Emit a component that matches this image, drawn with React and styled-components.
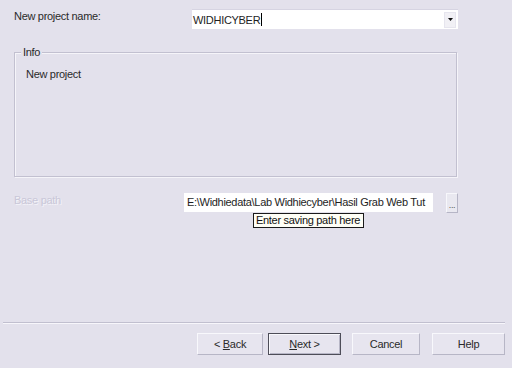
import React from "react";
import styled, { createGlobalStyle } from "styled-components";

const Global = createGlobalStyle`
  html, body { margin: 0; padding: 0; background: #e3e1ec; }
  body { font-family: "Liberation Sans", Arial, sans-serif; font-size: 11px; letter-spacing: -0.3px; color: #2a2a2a; }
`;

const Dialog = styled.div`
  width: 512px;
  height: 368px;
  box-sizing: border-box;
  padding-top: 9px;
  display: flex;
  flex-direction: column;
  background: #e3e1ec;
  overflow: hidden;
`;

const Row = styled.div`
  display: flex;
  align-items: flex-start;
  height: 20px;
  margin-top: ${(p) => p.$mt || 0}px;
  padding-left: 14px;
`;

const Label = styled.div`
  width: ${(p) => p.$w}px;
  flex: none;
  line-height: 13px;
  padding-top: 1px;
  color: ${(p) => (p.$disabled ? "#c9c7d8" : "#2a2a2a")};
  text-shadow: ${(p) => (p.$disabled ? "1px 1px 0 #f4f3f9" : "none")};
`;

const Combo = styled.div`
  width: 266px;
  height: 20px;
  box-sizing: border-box;
  background: #fff;
  border-top: 1px solid #d6d4e2;
  display: flex;
  align-items: center;
  padding-left: 1px;
`;

const ComboText = styled.span`
  flex: 1;
  display: flex;
  align-items: center;
  color: #1e1e1e;
`;

const Caret = styled.span`
  display: inline-block;
  width: 1px;
  height: 13px;
  background: #000;
  margin-left: 1px;
`;

const DropButton = styled.div`
  width: 12px;
  height: 16px;
  margin-right: 2px;
  box-sizing: border-box;
  background: #f1f0f5;
  border: 1px solid #e6e5ee;
  display: flex;
  align-items: center;
  justify-content: center;
`;

const Group = styled.div`
  position: relative;
  margin: 23px 0 0 14px;
  width: 443px;
  height: 125px;
  box-sizing: border-box;
  border: 1px solid #c2c0d0;
  box-shadow: inset 1px 1px 0 #f5f4f9, 1px 1px 0 #f5f4f9;
  padding: 15px 0 0 11px;
`;

const Legend = styled.span`
  position: absolute;
  top: -8px;
  left: 6px;
  padding: 0 2px;
  line-height: 14px;
  background: #e3e1ec;
`;

const Info = styled.div`
  line-height: 13px;
`;

const FieldWrap = styled.div`
  position: relative;
  flex: none;
`;

const PathField = styled.div`
  width: 249px;
  height: 19px;
  box-sizing: border-box;
  background: #fff;
  padding: 3px 0 0 3px;
  line-height: 13px;
  white-space: nowrap;
  overflow: hidden;
  color: #1e1e1e;
`;

const Tooltip = styled.div`
  position: absolute;
  left: 69px;
  top: 20px;
  height: 15px;
  box-sizing: border-box;
  padding: 0 3px 0 2px;
  line-height: 13px;
  white-space: nowrap;
  background: #fefef6;
  border: 1px solid #1a1a1a;
  color: #111;
`;

const Browse = styled.div`
  margin-left: 13px;
  width: 12px;
  height: 20px;
  box-sizing: border-box;
  background: #e9e8f0;
  border: 1px solid;
  border-color: #f7f7fb #b6b5c6 #b6b5c6 #f7f7fb;
  display: flex;
  align-items: flex-end;
  justify-content: center;
  font-size: 9px;
  line-height: 10px;
  color: #555;
  padding-bottom: 2px;
`;

const Separator = styled.div`
  margin: auto 7px 0 3px;
  height: 1px;
  background: #c1bfcf;
  border-bottom: 1px solid #f7f6fb;
`;

const ButtonBar = styled.div`
  display: flex;
  padding: 9px 0 13px 197px;
`;

const Button = styled.div`
  width: ${(p) => p.$w}px;
  margin-left: ${(p) => p.$ml || 0}px;
  height: 22px;
  box-sizing: border-box;
  display: flex;
  align-items: center;
  justify-content: center;
  background: #e7e5ef;
  border: 1px solid;
  border-color: ${(p) =>
    p.$default ? "#4d4d58" : "#f8f8fc #b7b6c6 #b7b6c6 #f8f8fc"};
  box-shadow: ${(p) =>
    p.$default ? "inset 1px 1px 0 #f8f8fc, inset -1px -1px 0 #b7b6c6" : "none"};
  color: #2a2a2a;
  line-height: 13px;
`;

const U = styled.span`
  text-decoration: underline;
`;

export default function App() {
  return (
    <>
      <Global />
      <Dialog>
        <Row>
          <Label $w={178}>New project name:</Label>
          <Combo>
            <ComboText>
              WIDHICYBER
              <Caret />
            </ComboText>
            <DropButton>
              <svg width="5" height="3" viewBox="0 0 5 3">
                <path d="M0 0h5L2.5 3z" fill="#111" />
              </svg>
            </DropButton>
          </Combo>
        </Row>

        <Group>
          <Legend>Info</Legend>
          <Info>New project</Info>
        </Group>

        <Row $mt={16}>
          <Label $w={170} $disabled>
            Base path
          </Label>
          <FieldWrap>
            <PathField>E:\Widhiedata\Lab Widhiecyber\Hasil Grab Web Tut</PathField>
            <Tooltip>Enter saving path here</Tooltip>
          </FieldWrap>
          <Browse>...</Browse>
        </Row>

        <Separator />

        <ButtonBar>
          <Button $w={66}>
            &lt;&nbsp;<U>B</U>ack
          </Button>
          <Button $w={73} $ml={5} $default>
            <U>N</U>ext&nbsp;&gt;
          </Button>
          <Button $w={68} $ml={11}>
            Cancel
          </Button>
          <Button $w={73} $ml={12}>
            Help
          </Button>
        </ButtonBar>
      </Dialog>
    </>
  );
}
